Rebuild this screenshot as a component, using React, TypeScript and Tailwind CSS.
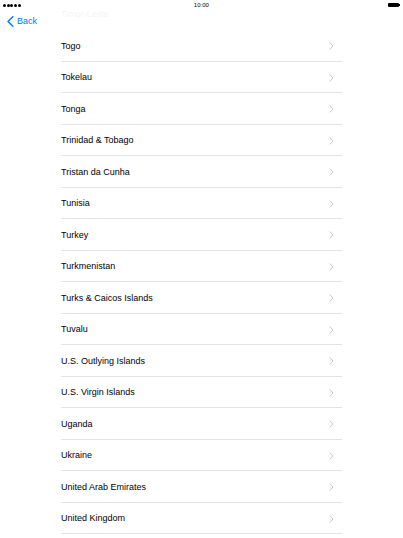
import React from "react";

const COUNTRIES = [
  "Timor-Leste",
  "Togo",
  "Tokelau",
  "Tonga",
  "Trinidad & Tobago",
  "Tristan da Cunha",
  "Tunisia",
  "Turkey",
  "Turkmenistan",
  "Turks & Caicos Islands",
  "Tuvalu",
  "U.S. Outlying Islands",
  "U.S. Virgin Islands",
  "Uganda",
  "Ukraine",
  "United Arab Emirates",
  "United Kingdom",
];

function Chevron() {
  return (
    <svg width="5" height="8" viewBox="0 0 5 8" fill="none">
      <path d="M1 0.8 L4 4 L1 7.2" stroke="#c7c7cc" strokeWidth="1" strokeLinecap="round" strokeLinejoin="round" />
    </svg>
  );
}

function CountryRow({ name }: { name: string }) {
  return (
    <div className="flex h-[31.5px] items-center justify-between border-b border-[#e3e3e6] pt-[2px] pr-[8px]">
      <span className="text-[9px] leading-[11px] text-black">{name}</span>
      <Chevron />
    </div>
  );
}

export default function App() {
  return (
    <div
      className="relative h-[538px] w-[403px] overflow-hidden bg-white"
      style={{ fontFamily: '"Liberation Sans", Arial, sans-serif' }}
    >
      <div className="mt-[-1.5px] ml-[61px] w-[281px]">
        {COUNTRIES.map((c) => (
          <CountryRow key={c} name={c} />
        ))}
      </div>

      {/* translucent status + nav bar */}
      <div className="absolute inset-x-0 top-0 h-[30px] bg-white/[0.95]">
        <div className="flex h-[10px] items-center justify-between px-[3px]">
          <div className="flex gap-[0.7px]">
            {[0, 1, 2, 3, 4].map((i) => (
              <span key={i} className="block h-[3px] w-[3px] rounded-full bg-black" />
            ))}
          </div>
          <span className="text-[6px] leading-[7px] text-black">10:00</span>
          <div className="flex w-[18px] items-center justify-end">
            <div className="h-[4px] w-[11px] rounded-[1px] bg-black" />
            <div className="h-[2px] w-[1px] bg-black" />
          </div>
        </div>
        <div className="mt-[6px] flex items-center gap-[3px] pl-[7px] text-[#007aff]">
          <svg width="7" height="11" viewBox="0 0 7 11" fill="none">
            <path d="M5.8 0.8 L1 5.5 L5.8 10.2" stroke="#007aff" strokeWidth="1.5" strokeLinecap="round" strokeLinejoin="round" />
          </svg>
          <span className="text-[9px] leading-[11px]">Back</span>
        </div>
      </div>
    </div>
  );
}
